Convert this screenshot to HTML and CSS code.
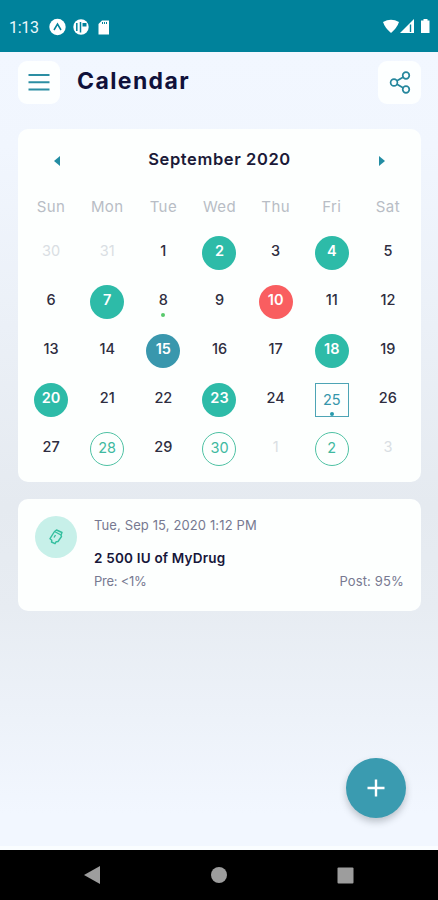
FILE: index.html
```
<!DOCTYPE html>
<html lang="en">
<head>
<meta charset="utf-8">
<title>Calendar</title>
<link rel="stylesheet" href="styles.css">
</head>
<body>
<div class="status">
  <span class="time">1:13</span>
  <svg class="notices" width="62" height="18" viewBox="0 0 62 18">
    <circle cx="8.500" cy="9" r="8.200" fill="#fff"/>
    <path d="M5 12 8.500 6l3.500 6" fill="none" stroke="#00829b" stroke-width="1.500"/>
    <circle cx="32" cy="9" r="7.700" fill="#fff"/>
    <path d="M27.800 5v8M31.500 4v10.500" fill="none" stroke="#00829b" stroke-width="1.500"/>
    <path d="M33.500 5h4v3.500h-4z" fill="#00829b"/>
    <path d="M53 2.500h7v14H49.500V6z" fill="#fff"/>
    <path d="M53.500 4v2M55.500 4v2M57.500 4v2" stroke="#00829b" stroke-width="1"/>
  </svg>
  <svg class="signals" width="48" height="16" viewBox="0 0 48 16">
    <path d="M0 3Q8-1.500 16 3 14 9 8 14 2 9 0 3z" fill="#fff"/>
    <path d="M17 14 31 0v14z" fill="#fff"/>
    <path d="M27.500 5.500v7.500" stroke="#00829b" stroke-width="1.400"/>
    <path d="M40.500 0h4v1.500h2V14h-8.500V1.500h2.500z" fill="#fff"/>
  </svg>
</div>
<main class="screen">
  <header class="header">
    <button class="tile menu" aria-label="Menu">
      <svg width="22" height="18" viewBox="0 0 22 18"><path d="M0.500 2h21M0.500 9.200h21M0.500 16.400h21" stroke="#2b8ea3" stroke-width="2"/></svg>
    </button>
    <h1>Calendar</h1>
    <button class="tile" aria-label="Share">
      <svg width="22" height="24" viewBox="0 0 22 24" fill="none" stroke="#26879d" stroke-width="1.700"><circle cx="5" cy="11.500" r="3.400"/><circle cx="17" cy="4.500" r="3.300"/><circle cx="17" cy="18.500" r="3.300"/><path d="m8 9.800 6-3.600M8 13.200l6 3.600"/></svg>
    </button>
  </header>

  <section class="card calendar">
    <div class="month">
      <svg width="6" height="10" viewBox="0 0 6 10"><path d="M6 0v10L0 5z" fill="#238da3"/></svg>
      <h2>September 2020</h2>
      <svg width="6" height="10" viewBox="0 0 6 10"><path d="M0 0v10l6-5z" fill="#238da3"/></svg>
    </div>
    <div class="grid week">
      <span>Sun</span><span>Mon</span><span>Tue</span><span>Wed</span><span>Thu</span><span>Fri</span><span>Sat</span>
    </div>
    <div class="grid days">
      <span class="day out">30</span><span class="day out">31</span><span class="day">1</span><span class="day done">2</span><span class="day">3</span><span class="day done">4</span><span class="day">5</span>
      <span class="day">6</span><span class="day done">7</span><span class="day dot">8</span><span class="day">9</span><span class="day missed">10</span><span class="day">11</span><span class="day">12</span>
      <span class="day">13</span><span class="day">14</span><span class="day picked">15</span><span class="day">16</span><span class="day">17</span><span class="day done">18</span><span class="day">19</span>
      <span class="day done">20</span><span class="day">21</span><span class="day">22</span><span class="day done">23</span><span class="day">24</span><span class="day today">25</span><span class="day">26</span>
      <span class="day">27</span><span class="day plan">28</span><span class="day">29</span><span class="day plan">30</span><span class="day out">1</span><span class="day plan">2</span><span class="day out">3</span>
    </div>
  </section>

  <section class="card entry">
    <div class="badge">
      <svg width="16" height="18" viewBox="0 0 16 18" fill="none" stroke="#35bf9f" stroke-width="1.400" stroke-linejoin="round"><path d="M6.500 3.500 8.500 2l5.500 2.500-1 2.500.5 1.500-3.500 5-1.800.2-1.200 2-3.500-1.700.3-1.800-1.800-1.500z"/><path d="M6.500 3.500 13 7M6 9.500l1.500-2.500"/></svg>
    </div>
    <div class="info">
      <div class="when">Tue, Sep 15, 2020 1:12 PM</div>
      <div class="dose">2 500 IU of MyDrug</div>
      <div class="levels"><span class="pre">Pre: &lt;1%</span><span class="post">Post: 95%</span></div>
    </div>
  </section>
  <button class="fab" aria-label="Add">
    <svg width="18" height="18" viewBox="0 0 18 18"><path d="M9 .5v17M.5 9h17" stroke="#fff" stroke-width="2.400"/></svg>
  </button>
</main>
<nav class="nav">
  <svg width="16" height="18" viewBox="0 0 16 18"><path d="M16 0v18L0 9z" fill="#9d9d9d"/></svg>
  <svg width="16" height="16" viewBox="0 0 16 16"><circle cx="8" cy="8" r="8" fill="#9d9d9d"/></svg>
  <svg width="17" height="17" viewBox="0 0 17 17"><rect x=".5" y=".5" width="16" height="16" rx="1" fill="#9d9d9d"/></svg>
</nav>
</body>
</html>
```
FILE: styles.css
```
* { box-sizing: border-box; }
body {
  margin: 0;
  height: 900px;
  display: flex;
  flex-direction: column;
  overflow: hidden;
  font-family: Inter, "Open Sans", sans-serif;
  color: #201f38;
}
svg { display: block; flex: none; }
h1, h2 { margin: 0; }
button { border: 0; padding: 0; }

.status {
  height: 52px;
  flex: none;
  background: #00829b;
  color: #e9f8fb;
  display: flex;
  align-items: center;
  padding: 2px 7px 0 9px;
}
.time { font: 16px/20px Roboto, sans-serif; width: 40px; padding-top: 2px; letter-spacing: -0.3px; white-space: nowrap; }
.signals { margin-left: auto; }

.screen {
  height: 798px;
  flex: none;
  padding: 9px 17px 0 18px;
  background: linear-gradient(#f2f7ff 0%, #f1f6fe 12%, #e5eaf0 57%, #e7ecf2 70%, #f2f7ff 96%, #f2f7ff 100%);
  border-bottom: 4px solid #fafdff;
  position: relative;
}
.header { display: flex; align-items: center; height: 43px; }
.tile {
  width: 43px;
  height: 43px;
  border-radius: 9px;
  background: #fdffff;
  display: grid;
  place-items: center;
}
.menu { width: 42px; padding-bottom: 1px; }
.header h1 {
  flex: 1;
  padding: 0 0 3px 17px;
  font-size: 23px;
  line-height: 30px;
  font-weight: 700;
  letter-spacing: 1.4px;
  color: #10113a;
}
.card { background: #fdfffe; border-radius: 10px; }

.calendar { height: 353px; margin-top: 25px; padding: 16px 5px 0; }
.month {
  display: flex;
  justify-content: space-between;
  align-items: center;
  height: 28px;
  padding: 0 31px;
}
.month svg { margin-top: 4px; }
.month h2 { font-size: 16.5px; line-height: 28px; font-weight: 600; letter-spacing: 0.6px; color: #1b1a38; }
.grid { display: grid; grid-template-columns: repeat(7, 1fr); justify-items: center; }
.week { margin-top: 23px; font-size: 15px; line-height: 22px; letter-spacing: 0.4px; color: #b8bdc5; }
.days { margin-top: 18px; grid-auto-rows: 49px; }
.day {
  width: 34px;
  height: 34px;
  border-radius: 50%;
  text-align: center;
  font-size: 14.5px;
  font-weight: 500;
  line-height: 30px;
  color: #2e2d40;
  position: relative;
}
.out { color: #d9dee3; font-weight: 400; }
.done, .missed, .picked { color: #fff; font-weight: 600; }
.done { background: #2dbba8; }
.missed { background: #f95e60; }
.picked { background: #3997ad; }
.plan { border: 1px solid #4fc2a4; color: #40b9a0; font-weight: 400; }
.today { border: 1.5px solid #4da4b5; border-radius: 0; color: #3596ab; font-weight: 400; line-height: 31px; }
.dot::after, .today::after {
  content: "";
  position: absolute;
  left: 15px;
  bottom: 2px;
  width: 4px;
  height: 4px;
  border-radius: 50%;
  background: #58c96c;
}
.today::after { left: 14px; bottom: 0; background: #289aac; }

.entry { margin-top: 17px; height: 112px; padding: 17px; display: flex; gap: 17px; }
.badge {
  width: 42px;
  height: 42px;
  flex: none;
  border-radius: 50%;
  background: #c7f0e9;
  display: grid;
  place-items: center;
}
.info { flex: 1; font-size: 13px; line-height: 20px; color: #777991; white-space: nowrap; }
.when { letter-spacing: 0.12px; margin-top: -1px; }
.dose { margin-top: 13px; font-size: 13.5px; font-weight: 600; color: #17163a; letter-spacing: 0.2px; }
.levels { display: flex; justify-content: space-between; margin-top: 3px; }
.pre { letter-spacing: -0.25px; }
.post { letter-spacing: 0.15px; }

.fab {
  position: absolute;
  left: 346px;
  top: 706px;
  width: 60px;
  height: 60px;
  border-radius: 50%;
  background: #3a9bb0;
  display: grid;
  place-items: center;
  box-shadow: 0 4px 7px rgba(50, 60, 70, 0.28);
}
.nav {
  flex: 1;
  background: #000;
  display: flex;
  align-items: center;
  justify-content: space-between;
  padding: 0 84px;
}
```
